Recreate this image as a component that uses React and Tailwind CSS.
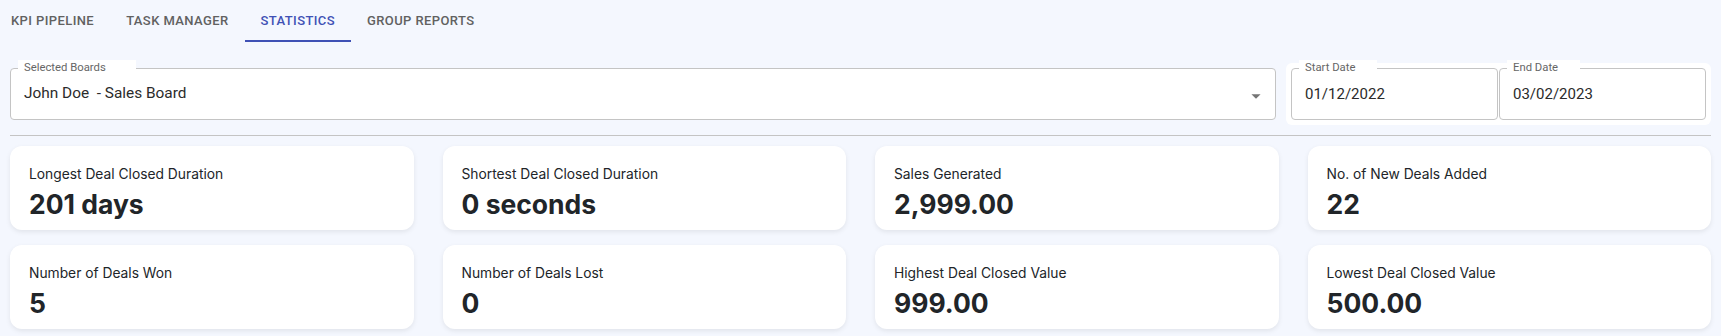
import React from "react";

const tabs = ["KPI Pipeline", "Task Manager", "Statistics", "Group Reports"];

const stats = [
  { label: "Longest Deal Closed Duration", value: "201 days" },
  { label: "Shortest Deal Closed Duration", value: "0 seconds" },
  { label: "Sales Generated", value: "2,999.00" },
  { label: "No. of New Deals Added", value: "22" },
  { label: "Number of Deals Won", value: "5" },
  { label: "Number of Deals Lost", value: "0" },
  { label: "Highest Deal Closed Value", value: "999.00" },
  { label: "Lowest Deal Closed Value", value: "500.00" },
];

const roboto = "font-['Roboto','Liberation_Sans',sans-serif]";

const OutlinedField = ({ label, value, notchPad = "pr-[22px]", textSize = "text-[15px]", className = "", children }) => (
  <div className={`relative h-[52px] rounded-[4px] border border-[#c4c4c4] bg-white flex items-center px-[13px] ${className}`}>
    <span className={`absolute left-[7px] -top-[9px] bg-white pl-[6px] ${notchPad} text-[11.3px] leading-[16px] text-[#666] ${roboto}`}>
      {label}
    </span>
    <span className={`whitespace-pre ${textSize} text-[#2b2b2b] ${roboto}`}>{value}</span>
    {children}
  </div>
);

const StatCard = ({ label, value }) => (
  <div className="h-[84px] rounded-[12px] bg-white shadow-[0_2px_5px_rgba(0,0,0,0.08)] px-[19px] pt-[19px] font-['Inter','Noto_Sans',sans-serif] text-[#212529]">
    <p className="text-[13.8px] leading-[18px]">{label}</p>
    <p className="mt-[4px] text-[26.5px] leading-[34px] font-bold">{value}</p>
  </div>
);

export default function App() {
  return (
    <div className="w-[1721px] h-[336px] bg-[#f4f7fe] overflow-hidden">
      {/* Tabs */}
      <div className="flex h-[42px] -ml-[5px]">
        {tabs.map((t) => {
          const active = t === "Statistics";
          return (
            <div
              key={t}
              className={`h-full px-4 flex items-center uppercase text-[13px] font-medium tracking-[0.4px] ${roboto} ${
                active ? "text-[#3f51b5] border-b-2 border-[#3f51b5] pt-[2px]" : "text-[#616161]"
              }`}
            >
              {t}
            </div>
          );
        })}
      </div>

      {/* Filters */}
      <div className="flex items-start px-[10px] mt-[21px]">
        <OutlinedField
          label="Selected Boards"
          value="John Doe  - Sales Board"
          notchPad="pr-[30px]"
          textSize="text-[15.4px]"
          className="w-[1266px] mt-[5px]"
        >
          <svg viewBox="0 0 24 24" className="absolute right-[8px] top-[16px] w-[22px] h-[22px] fill-[#757575]">
            <path d="M7 10l5 5 5-5z" />
          </svg>
        </OutlinedField>
        <div className="ml-[10px] w-[425px] h-[62px] rounded-[6px] bg-white flex gap-px p-[5px]">
          <OutlinedField label="Start Date" value="01/12/2022" className="w-[207px]" />
          <OutlinedField label="End Date" value="03/02/2023" className="w-[207px]" />
        </div>
      </div>

      {/* Divider */}
      <div className="mx-[10px] mt-[10px] h-px bg-[#c4c4c4]" />

      {/* Stats */}
      <div className="grid grid-cols-4 gap-x-[29px] gap-y-[15px] px-[10px] mt-[10px]">
        {stats.map((s) => (
          <StatCard key={s.label} {...s} />
        ))}
      </div>
    </div>
  );
}
